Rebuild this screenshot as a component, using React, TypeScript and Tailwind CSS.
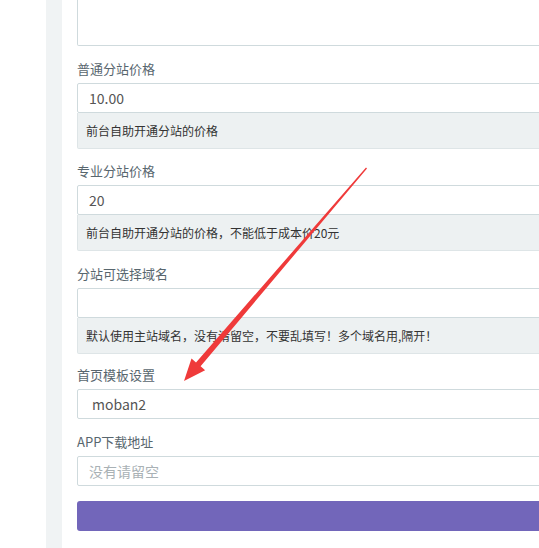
const fieldFont = { fontFamily: '"Noto Sans CJK SC", "Noto Sans", sans-serif' };

function Label({ children }: { children: React.ReactNode }) {
  return (
    <div className="mb-[4px] h-[20px] text-[13px] leading-[20px] text-[#58666e]">
      {children}
    </div>
  );
}

function Input({ value, placeholder, select }: { value?: string; placeholder?: string; select?: boolean }) {
  return (
    <div
      className={`flex h-[30px] items-center rounded-[2px] border border-[#cfdadd] bg-white text-[14px] ${
        select ? "pl-[14px]" : "pl-[11px]"
      } ${value ? "text-[#555]" : "text-[#a9b1b5]"}`}
    >
      {value ?? placeholder ?? ""}
    </div>
  );
}

function Help({ children }: { children: React.ReactNode }) {
  return (
    <div className="flex h-[36px] items-center rounded-b-[2px] border border-t-0 border-[#dee5e7] bg-[#edf1f2] pl-[8px] text-[12px] text-[#333]">
      {children}
    </div>
  );
}

function Arrow() {
  return (
    <svg className="pointer-events-none absolute left-0 top-0" width="539" height="548">
      <polygon
        points="366,167.5 367,168.5 200.6,366.2 205.1,370.2 184,381 191.5,358.4 196,362.4"
        fill="#ef3a3a"
      />
    </svg>
  );
}

export default function App() {
  return (
    <div className="relative h-[548px] w-[539px] overflow-hidden bg-white" style={fieldFont}>
      <div className="flex h-full">
        <div className="w-[46px] shrink-0 bg-white" />
        <div className="w-[16px] shrink-0 bg-[#f0f3f4]" />
        <div className="w-[640px] shrink-0 pl-[15px]">
          <div className="mb-[13px] h-[46px] rounded-b-[2px] border border-t-0 border-[#cfdadd]" />

          <div className="mb-[12px]">
            <Label>普通分站价格</Label>
            <Input value="10.00" />
            <Help>前台自助开通分站的价格</Help>
          </div>

          <div className="mb-[13px]">
            <Label>专业分站价格</Label>
            <Input value="20" />
            <Help>前台自助开通分站的价格，不能低于成本价20元</Help>
          </div>

          <div className="mb-[11px]">
            <Label>分站可选择域名</Label>
            <Input />
            <Help>默认使用主站域名，没有请留空，不要乱填写！多个域名用,隔开！</Help>
          </div>

          <div className="mb-[13px]">
            <Label>首页模板设置</Label>
            <Input value="moban2" select />
          </div>

          <div className="mb-[15px]">
            <Label>APP下载地址</Label>
            <Input placeholder="没有请留空" />
          </div>

          <div className="h-[30px] rounded-[3px] bg-[#7266ba]" />
        </div>
      </div>
      <Arrow />
    </div>
  );
}
